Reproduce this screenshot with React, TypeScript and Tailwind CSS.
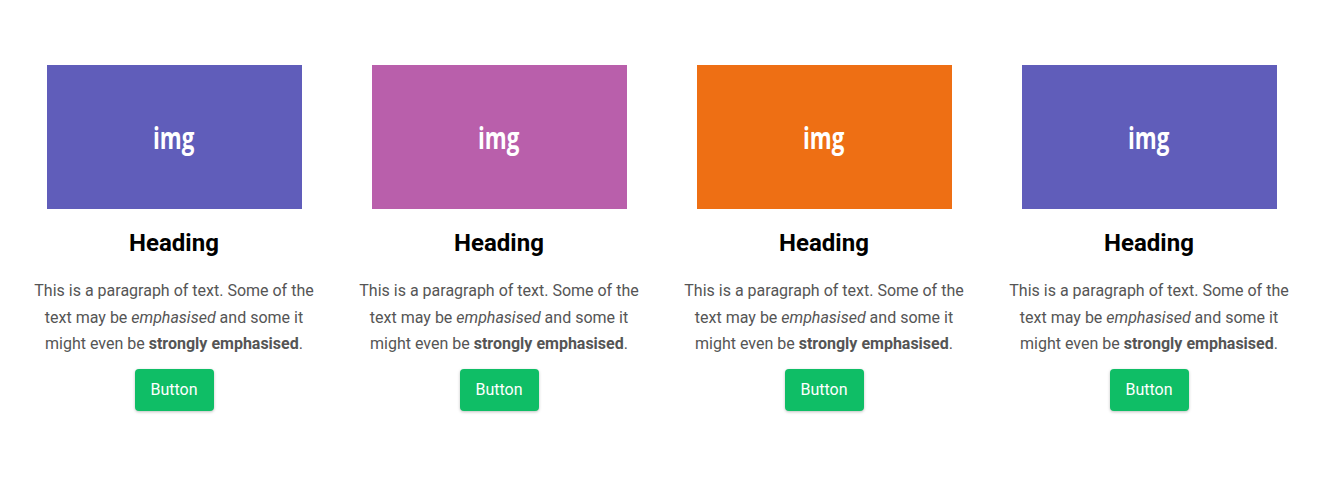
import React from "react";

const cards = [
  { color: "bg-[#605dba]" },
  { color: "bg-[#b95fab]" },
  { color: "bg-[#ee6f14]" },
  { color: "bg-[#605dba]" },
];

function Card({ color }: { color: string }) {
  return (
    <div className="w-[325px] px-[22px] flex flex-col items-center text-center">
      <div className={`w-[255px] h-[144px] ${color} flex items-center justify-center`}>
        <span
          className="inline-block text-white text-[31px] font-bold leading-none scale-x-[0.72] pt-[1px]"
          style={{ fontFamily: '"Open Sans", sans-serif' }}
        >
          img
        </span>
      </div>
      <h2 className="mt-5 text-[24px] leading-[28px] font-bold text-black">Heading</h2>
      <p className="mt-[21px] text-[16px] leading-[26.5px] text-[#555555]">
        This is a paragraph of text. Some of the text may be <em>emphasised</em> and some it might even be{" "}
        <strong>strongly emphasised</strong>.
      </p>
      <button className="mt-[11px] w-[79px] h-[42px] rounded-[4px] bg-[#0fbe66] text-white text-[16px] shadow-[0_1px_3px_rgba(0,0,0,0.25)]">
        Button
      </button>
    </div>
  );
}

export default function App() {
  return (
    <div className="w-full h-[479px] bg-white pt-[65px] flex justify-center" style={{ fontFamily: "Roboto, sans-serif" }}>
      {cards.map((c, i) => (
        <Card key={i} color={c.color} />
      ))}
    </div>
  );
}
